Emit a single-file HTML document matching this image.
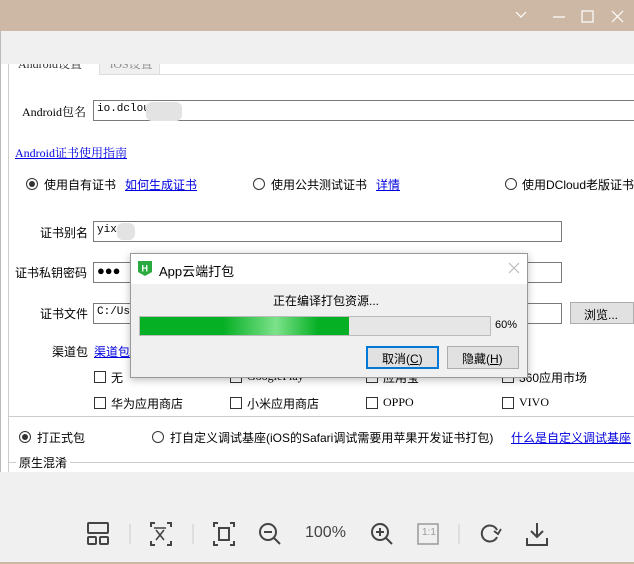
<!DOCTYPE html>
<html><head><meta charset="utf-8"><style>
*{margin:0;padding:0;box-sizing:border-box}
body{width:634px;height:564px;overflow:hidden;position:relative;background:#fff;font-family:"Liberation Sans","Noto Sans CJK SC",sans-serif;font-size:12px;color:#000}
.a{position:absolute;white-space:nowrap}
.s{font-family:"Liberation Serif","Noto Serif CJK SC",serif;font-size:12px}
.in{position:absolute;border:1px solid #7a7a7a;background:#fff;height:21px;padding:2px 3px;font-family:"Liberation Mono","Noto Sans CJK SC",monospace;font-size:11px}
.lk{color:#0000e0;text-decoration:underline}
.rd{position:absolute;width:12px;height:12px;border:1px solid #333;border-radius:50%;background:#fff}
.rd.on::after{content:"";position:absolute;left:2px;top:2px;width:6px;height:6px;border-radius:50%;background:#333}
.cb{position:absolute;width:12px;height:12px;border:1px solid #333;background:#fff}
.blur{position:absolute;background:#e3e3e3;border-radius:6px}
</style></head><body>
<!-- tabs (partially hidden) -->
<div class="a s" style="left:18px;top:55px;color:#333">Android设置</div>
<div class="a" style="left:99px;top:55px;width:61px;height:20px;background:#f0f0f0;border:1px solid #ddd"></div>
<div class="a s" style="left:110px;top:55px;color:#888">iOS设置</div>
<div class="a" style="left:160px;top:74px;width:474px;height:1px;background:#ddd"></div>
<!-- title bar -->
<div class="a" style="left:0;top:0;width:634px;height:31px;background:#cdb8a5"></div>
<svg class="a" style="left:510px;top:8px" width="120" height="16" viewBox="0 0 120 16" fill="none" stroke="#fff" stroke-width="1.2">
<path d="M6 4l5 5 5-5"/><path d="M43 9h12"/><rect x="72" y="3" width="11" height="11"/><path d="M102 3l11 11M113 3l-11 11"/></svg>
<div class="a" style="left:0;top:31px;width:634px;height:33px;background:#f0f0f0"></div>
<div class="a" style="left:0;top:31px;width:1px;height:533px;background:#bbb"></div>
<div class="a" style="left:8px;top:64px;width:1px;height:408px;background:#ccc"></div>
<!-- package -->
<div class="a s" style="left:22px;top:103px">Android包名</div>
<div class="in" style="left:93px;top:100px;width:545px">io.dclou</div>
<div class="blur" style="left:146px;top:102px;width:36px;height:19px"></div>
<div class="a s lk" style="left:15px;top:144px">Android证书使用指南</div>
<div class="rd on" style="left:26px;top:178px"></div>
<div class="a" style="left:44px;top:176px">使用自有证书</div>
<div class="a lk" style="left:125px;top:176px">如何生成证书</div>
<div class="rd" style="left:253px;top:178px"></div>
<div class="a" style="left:271px;top:176px">使用公共测试证书</div>
<div class="a lk" style="left:376px;top:176px">详情</div>
<div class="rd" style="left:505px;top:178px"></div>
<div class="a" style="left:522px;top:176px">使用DCloud老版证书</div>
<div class="a" style="left:40px;top:224px">证书别名</div>
<div class="in" style="left:93px;top:221px;width:469px">yix</div>
<div class="blur" style="left:117px;top:223px;width:18px;height:17px"></div>
<div class="a" style="left:15px;top:264px">证书私钥密码</div>
<div class="in" style="left:93px;top:262px;width:469px;font-size:13px;line-height:14px">●●●</div>
<div class="a" style="left:40px;top:305px">证书文件</div>
<div class="in" style="left:93px;top:303px;width:469px">C:/Us</div>
<div class="a" style="left:570px;top:302px;width:64px;height:22px;background:#e1e1e1;border:1px solid #adadad;padding:3px 0 0 13px">浏览...</div>
<div class="a" style="left:52px;top:343px">渠道包</div>
<div class="a lk" style="left:94px;top:343px">渠道包</div>
<div class="cb" style="left:94px;top:371px"></div><div class="a" style="left:111px;top:369px">无</div>
<div class="cb" style="left:230px;top:371px"></div><div class="a s" style="left:247px;top:369px">GooglePlay</div>
<div class="cb" style="left:366px;top:371px"></div><div class="a" style="left:383px;top:369px">应用宝</div>
<div class="cb" style="left:502px;top:371px"></div><div class="a" style="left:519px;top:369px">360应用市场</div>
<div class="cb" style="left:94px;top:397px"></div><div class="a" style="left:111px;top:395px">华为应用商店</div>
<div class="cb" style="left:230px;top:397px"></div><div class="a" style="left:247px;top:395px">小米应用商店</div>
<div class="cb" style="left:366px;top:397px"></div><div class="a s" style="left:383px;top:395px">OPPO</div>
<div class="cb" style="left:502px;top:397px"></div><div class="a s" style="left:519px;top:395px">VIVO</div>
<div class="a" style="left:8px;top:416px;width:626px;height:1px;background:#ccc"></div>
<div class="rd on" style="left:19px;top:431px"></div>
<div class="a" style="left:37px;top:429px">打正式包</div>
<div class="rd" style="left:152px;top:431px"></div>
<div class="a" style="left:170px;top:429px">打自定义调试基座(iOS的Safari调试需要用苹果开发证书打包)</div>
<div class="a lk" style="left:511px;top:429px">什么是自定义调试基座</div>
<div class="a" style="left:8px;top:462px;width:626px;height:1px;background:#ccc"></div>
<div class="a" style="left:16px;top:454px;background:#fff;padding:0 3px">原生混淆</div>
<!-- toolbar -->
<div class="a" style="left:0;top:472px;width:634px;height:90px;background:#f0f0f0"></div>
<div class="a" style="left:0;top:562px;width:634px;height:2px;background:#cdb8a5"></div>
<svg class="a" style="left:0;top:510px" width="634" height="50" viewBox="0 510 634 50" fill="none" stroke="#444" stroke-width="2">
<rect x="88" y="523" width="20" height="10" rx="1"/><rect x="88" y="537" width="8" height="7" rx="1"/><rect x="100" y="537" width="8" height="7" rx="1"/>
<path d="M130 524v20M193 524v20M459 524v20" stroke="#ccc" stroke-width="1"/>
<path d="M155 523h-4v4M167 523h4v4M151 541v4h4M171 541v4h-4"/><path d="M154 528h12M156 530l8 10M164 530l-8 10" stroke-width="1.6"/>
<path d="M218 523h-4v4M230 523h4v4M214 541v4h4M234 541v4h-4"/><rect x="219" y="528" width="10" height="12"/>
<circle cx="268" cy="532" r="8"/><path d="M264 532h8M274 538l6 6"/>
<circle cx="380" cy="532" r="8"/><path d="M376 532h8M380 528v8M386 538l6 6"/>
<rect x="418" y="524" width="20" height="20" stroke="#999" stroke-width="1.5"/>
<path d="M497 530a8 8 0 1 0 0 7" /><path d="M494 531l4 3 3-5" stroke-width="1.8"/>
<path d="M537 523v14M531 531l6 6 6-6M527 538v7h20v-7"/>
</svg>
<div class="a" style="left:422px;top:527px;font-size:10px;color:#999">1:1</div>
<div class="a" style="left:305px;top:524px;font-size:16px;color:#444">100%</div>
<!-- dialog -->
<div class="a" style="left:130px;top:253px;width:398px;height:125px;background:#f0f0f0;border:1px solid #999;box-shadow:0 2px 8px rgba(0,0,0,.25)"></div>
<div class="a" style="left:131px;top:254px;width:396px;height:30px;background:#fff"></div>
<svg class="a" style="left:138px;top:261px" width="14" height="15" viewBox="0 0 14 15"><path d="M0 0h14v11l-7 4-7-4z" fill="#2bab3f"/><text x="3.5" y="10.5" font-size="9" fill="#fff" font-family="Liberation Sans" font-weight="bold">H</text></svg>
<div class="a" style="left:159px;top:261px;font-size:13px">App云端打包</div>
<svg class="a" style="left:508px;top:262px" width="12" height="12" stroke="#bbb" stroke-width="1.2"><path d="M1 1l10 10M11 1L1 11"/></svg>
<div class="a" style="left:273px;top:292px">正在编译打包资源...</div>
<div class="a" style="left:139px;top:316px;width:352px;height:20px;background:#e6e6e6;border:1px solid #bcbcbc"></div>
<div class="a" style="left:140px;top:317px;width:209px;height:18px;background:linear-gradient(90deg,#06b025 0%,#06b025 40%,#7ce28a 65%,#06b025 85%,#06b025 100%)"></div>
<div class="a" style="left:495px;top:319px;font-size:11px">60%</div>
<div class="a" style="left:366px;top:346px;width:73px;height:23px;background:#e1e1e1;border:2px solid #0078d7;padding:2px 0 0 14px">取消(<u>C</u>)</div>
<div class="a" style="left:447px;top:346px;width:72px;height:23px;background:#e1e1e1;border:1px solid #adadad;padding:3px 0 0 14px">隐藏(<u>H</u>)</div>
</body></html>
